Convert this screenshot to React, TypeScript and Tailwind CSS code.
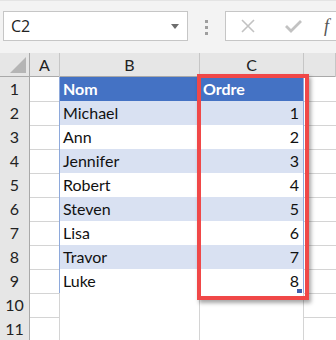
import React from 'react'

const font = { fontFamily: 'Lato, "Open Sans", sans-serif' }

const names = ['Michael', 'Ann', 'Jennifer', 'Robert', 'Steven', 'Lisa', 'Travor', 'Luke']

function TopBar() {
  return (
    <div className="h-[53px] bg-[#f3f3f3] border-t border-[#e4e4e4] flex items-start pt-[10px]">
      {/* name box */}
      <div className="ml-[3px] w-[185px] h-[30px] bg-white border border-[#c6c6c6] flex items-center pl-[7px] pr-[8px]">
        <span className="text-[16px] text-[#222] flex-1" style={{ fontFamily: '"Open Sans", sans-serif' }}>C2</span>
        <svg width="8" height="5" viewBox="0 0 8 5">
          <path d="M0 0 L8 0 L4 5 Z" fill="#6d6d6d" />
        </svg>
      </div>
      {/* separator dots */}
      <div className="ml-[17px] mt-[9px] flex flex-col gap-[3px]">
        <div className="w-[3px] h-[3px] bg-[#9e9e9e]" />
        <div className="w-[3px] h-[3px] bg-[#9e9e9e]" />
        <div className="w-[3px] h-[3px] bg-[#9e9e9e]" />
      </div>
      {/* formula bar */}
      <div className="ml-[17px] flex-1 h-[30px] bg-white border border-r-0 border-[#c6c6c6] flex items-center pl-[14px]">
        <svg width="16" height="16" viewBox="0 0 16 16">
          <path d="M2 2 L14 14 M14 2 L2 14" stroke="#c2c2c2" strokeWidth="1.6" />
        </svg>
        <svg className="ml-[28px]" width="19" height="16" viewBox="0 0 19 16">
          <path d="M2 8 L7 13 L17 3" stroke="#c2c2c2" strokeWidth="2.8" fill="none" />
        </svg>
        <span className="ml-[21px] italic text-[18px] text-[#555]" style={{ fontFamily: '"Liberation Serif", serif' }}>f</span>
      </div>
    </div>
  )
}

function HeaderRow() {
  return (
    <div className="grid grid-cols-[30px_30px_140px_104px_32px] h-[24px] bg-[#e6e6e6] border-b border-[#a9a9a9]">
      <div className="border-r border-[#a9a9a9] relative">
        <svg className="absolute left-[10px] top-[4px]" width="16" height="16" viewBox="0 0 16 16">
          <path d="M16 0 L16 16 L0 16 Z" fill="#b5b5b5" />
        </svg>
      </div>
      {['A', 'B', 'C', ''].map((c, i) => (
        <div key={i} className="border-r border-[#c6c6c6] flex items-center justify-center text-[16px] text-[#222]" style={font}>
          {c}
        </div>
      ))}
    </div>
  )
}

function Row({ n }: { n: number }) {
  const inTable = n <= 9
  const isHead = n === 1
  const shaded = inTable && !isHead && n % 2 === 0
  const name = n >= 2 && n <= 9 ? names[n - 2] : ''
  const tableBg = isHead ? 'bg-[#4472c4]' : shaded ? 'bg-[#d9e1f2]' : 'bg-white'
  const tableBorder = inTable ? 'border-b border-[#8ea9db]' : 'border-b border-[#d4d4d4]'
  const textCls = isHead ? 'text-white font-bold' : 'text-[#111]'
  return (
    <div className="grid grid-cols-[30px_30px_140px_104px_32px] h-[24px]">
      <div className="bg-[#e6e6e6] border-r border-[#a9a9a9] border-b border-b-[#c6c6c6] flex items-center justify-center text-[16px] text-[#222]" style={font}>
        {n}
      </div>
      <div className={`border-b border-[#d4d4d4] border-r ${inTable ? 'border-r-[#8ea9db]' : 'border-r-[#d4d4d4]'}`} />
      <div className={`${tableBg} ${tableBorder} border-r ${inTable ? 'border-r-transparent' : 'border-r-[#d4d4d4]'} flex items-center pl-[3px] text-[16px] ${textCls}`} style={font}>
        {isHead ? 'Nom' : name}
      </div>
      <div className={`${tableBg} ${tableBorder} border-r ${inTable ? 'border-r-[#8ea9db]' : 'border-r-[#d4d4d4]'} relative flex items-center text-[16px] ${textCls} ${isHead ? 'pl-[3px]' : 'justify-end pr-[4px]'}`} style={font}>
        {isHead ? 'Ordre' : inTable ? n - 1 : ''}
        {n === 9 && <div className="absolute right-[1px] bottom-[-1px] w-[5px] h-[5px] bg-[#3f5fae]" />}
      </div>
      <div className="border-b border-[#d4d4d4]" />
    </div>
  )
}

export default function App() {
  return (
    <div className="w-[336px] h-[340px] overflow-hidden bg-white relative">
      <TopBar />
      <div className="relative">
        <HeaderRow />
        {Array.from({ length: 11 }).map((_, i) => (
          <Row key={i} n={i + 1} />
        ))}
        {/* selection highlight */}
        <div className="absolute left-[197px] top-[21px] w-[112px] h-[226px] border-4 border-[#f04848] shadow-[2px_3px_4px_rgba(0,0,0,0.35)]" />
      </div>
    </div>
  )
}
